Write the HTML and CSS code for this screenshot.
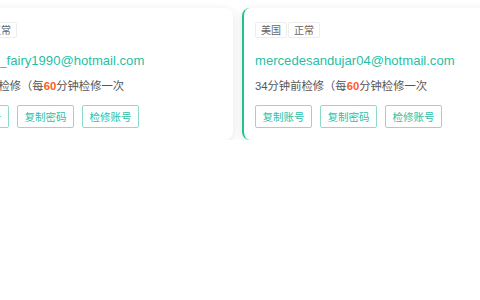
FILE: index.html
```html
<!DOCTYPE html>
<html lang="zh">
<head>
<meta charset="utf-8">
<link rel="stylesheet" href="styles.css">
</head>
<body>
<div class="track">
  <div class="card">
    <div class="tags"><span class="tag">美国</span><span class="tag">正常</span></div>
    <div class="email">summer_fairy1990@hotmail.com</div>
    <div class="info">40分钟前检修（每<b>60</b>分钟检修一次</div>
    <div class="actions"><button class="btn">复制账号</button><button class="btn">复制密码</button><button class="btn">检修账号</button></div>
  </div>
  <div class="card active">
    <div class="tags"><span class="tag">美国</span><span class="tag">正常</span></div>
    <div class="email">mercedesandujar04@hotmail.com</div>
    <div class="info">34分钟前检修（每<b>60</b>分钟检修一次</div>
    <div class="actions"><button class="btn">复制账号</button><button class="btn">复制密码</button><button class="btn">检修账号</button></div>
  </div>
</div>
</body>
</html>
```
FILE: styles.css
```css
html, body { margin: 0; background: #fff; }
body { font-family: "Liberation Sans", "Noto Sans CJK SC", sans-serif; overflow: hidden; }
.track { display: flex; gap: 9px; padding-top: 8px; margin-left: -61px; }
.card {
  flex: 0 0 294px; box-sizing: border-box; background: #fff;
  border-radius: 8px; border-left: 2px solid transparent;
  padding: 14px 11px 12px;
  box-shadow: 0 2px 10px rgba(0,0,0,0.1);
}
.card.active { border-left-color: #1fc48c; }
.tags { display: flex; gap: 1px; }
.tag {
  font-size: 10px; line-height: 14px; color: #666; padding: 0 5px;
  border: 1px solid #eee; border-radius: 2px; font-family: "Noto Sans CJK SC", sans-serif;
}
.email { margin-top: 13px; font-size: 13.1px; line-height: 20px; color: #1fbfa6; white-space: nowrap; }
.info { margin-top: 5px; font-size: 11.3px; line-height: 20px; color: #555; white-space: nowrap; }
.info b { color: #ff5a1f; }
.actions { display: flex; gap: 8px; margin-top: 9px; }
.btn {
  width: 57px; height: 23px; box-sizing: border-box; padding: 0;
  background: #fff; border: 1px solid #8cdccc; border-radius: 2px;
  color: #2bbfa6; font-size: 10.5px; font-family: "Noto Sans CJK SC", sans-serif;
}
```
